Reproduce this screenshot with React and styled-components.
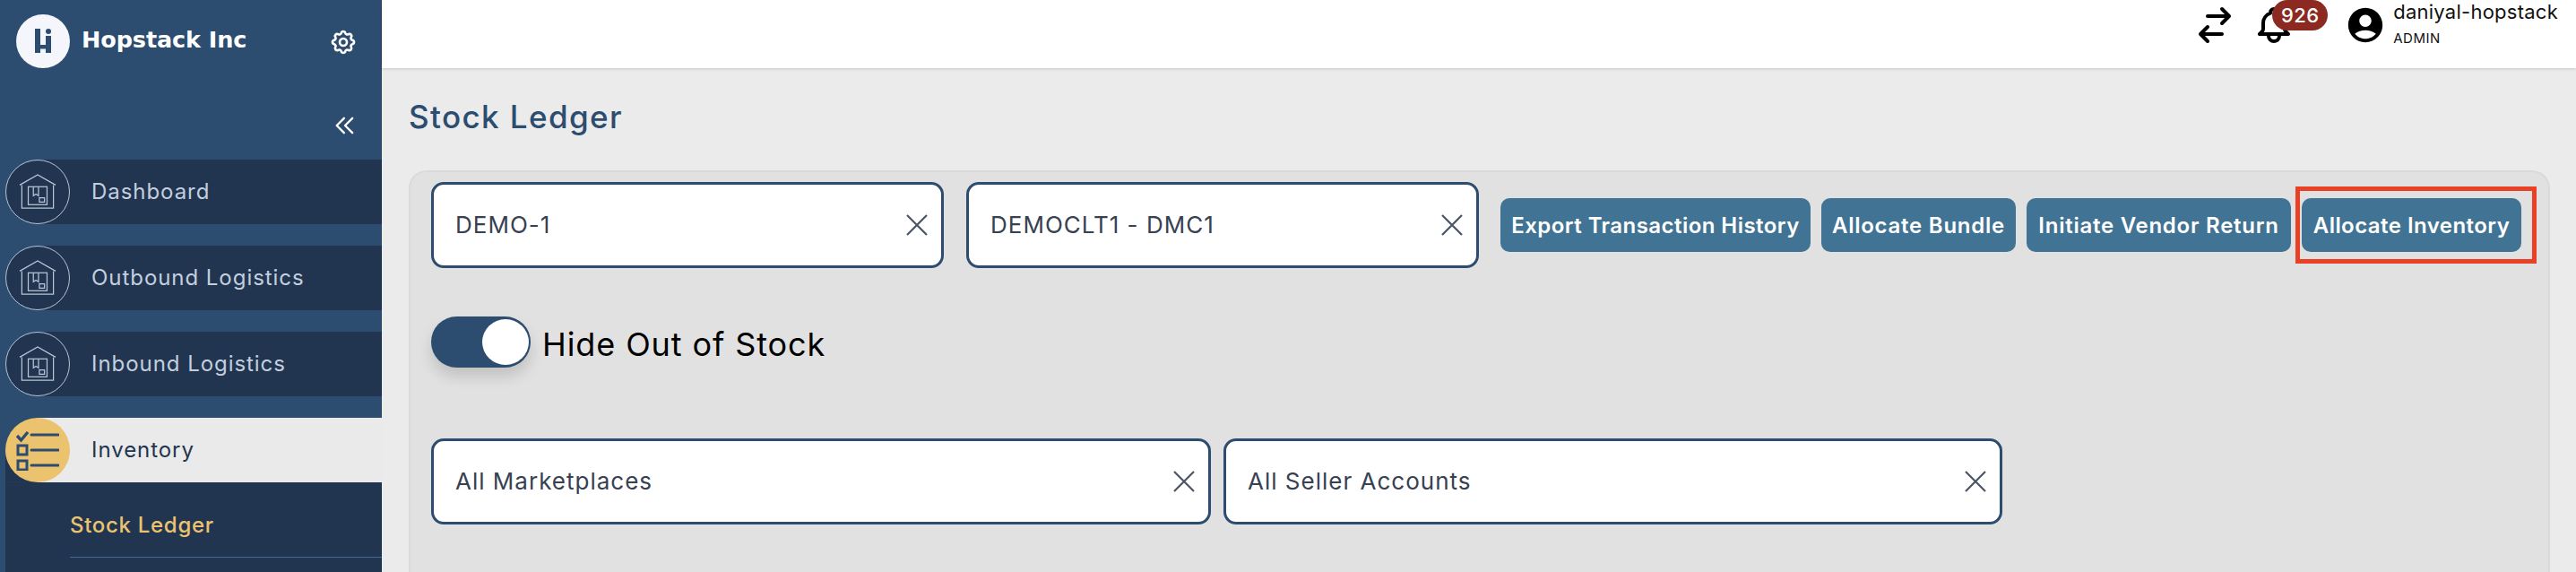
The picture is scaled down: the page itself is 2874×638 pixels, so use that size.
import React from "react";
import styled, { createGlobalStyle } from "styled-components";
import {
  HiOutlineCog,
  HiOutlineBell,
  HiOutlineSwitchHorizontal,
  HiOutlineChevronDoubleLeft,
} from "react-icons/hi";

const Global = createGlobalStyle`
  html, body { margin: 0; padding: 0; }
  body { font-family: Inter, "Liberation Sans", sans-serif; background: #ebebeb; overflow: hidden; }
  * { box-sizing: border-box; }
`;

const Shell = styled.div`
  display: flex;
  width: 2874px;
  height: 638px;
  overflow: hidden;
`;

const Sidebar = styled.aside`
  width: 426px;
  flex: none;
  background: #2c4c70;
  display: flex;
  flex-direction: column;
`;

const Brand = styled.div`
  height: 178px;
  padding: 16px 27px 0 18px;
  display: grid;
  grid-template-columns: 60px 1fr 30px;
  grid-template-rows: 60px 1fr;
  column-gap: 13px;
  align-items: center;
`;

const LogoDisc = styled.div`
  width: 60px;
  height: 60px;
  border-radius: 50%;
  background: #f4f6fb;
  display: flex;
  align-items: center;
  justify-content: center;
`;

const BrandName = styled.div`
  font-family: "DejaVu Sans", sans-serif;
  font-weight: 700;
  font-size: 25.5px;
  color: #fff;
  white-space: nowrap;
  margin-top: -4px;
  letter-spacing: -0.1px;
`;

const GearButton = styled.div`
  color: #fff;
  display: flex;
  font-size: 38px;
  margin: 2px 0 0 -2px;
`;

const Collapse = styled.div`
  grid-column: 3;
  grid-row: 2;
  color: #fff;
  font-size: 32px;
  display: flex;
  align-self: start;
  margin: 48px 0 0 2px;
`;

const Nav = styled.nav`
  display: flex;
  flex-direction: column;
  gap: 24px;
  padding-left: 6px;
`;

const NavRow = styled.div`
  height: 72px;
  display: flex;
  align-items: center;
  gap: 24px;
  background: ${(p) =>
    p.$active
      ? `linear-gradient(#eaeaea, #eaeaea) 36px 0 / 100% 100% no-repeat, linear-gradient(#223550, #223550) 0 100% / 36px 40% no-repeat`
      : `linear-gradient(#223550, #223550) 36px 0 / 100% 100% no-repeat`};
`;

const NavDisc = styled.div`
  width: 72px;
  height: 72px;
  border-radius: 50%;
  flex: none;
  display: flex;
  align-items: center;
  justify-content: center;
  background: ${(p) => (p.$active ? "#ebc36f" : "#223550")};
  border: ${(p) => (p.$active ? "none" : "1.2px solid #b9c5d4")};
`;

const NavLabel = styled.span`
  font-size: 24px;
  letter-spacing: 0.95px;
  white-space: nowrap;
  margin-top: -2px;
  color: ${(p) => (p.$active ? "#223550" : "#c3cfdf")};
`;

const SubMenu = styled.div`
  margin-top: -24px;
  background: #223550;
  height: 100px;
  padding: 0 0 0 72px;
`;

const SubItem = styled.div`
  height: 84px;
  display: flex;
  align-items: center;
  font-size: 24px;
  letter-spacing: 0.7px;
  font-weight: 500;
  color: #ebc36f;
  border-bottom: 1.5px solid #3a6e99;
  padding-top: 12px;
`;

const Main = styled.main`
  flex: 1;
  min-width: 0;
  display: flex;
  flex-direction: column;
`;

const Header = styled.header`
  height: 76px;
  flex: none;
  background: #fff;
  box-shadow: 0 1px 3px rgba(0, 0, 0, 0.16);
  display: flex;
  justify-content: flex-end;
  align-items: flex-start;
  padding-right: 20px;
  position: relative;
  z-index: 1;
`;

const HeaderIcon = styled.div`
  display: flex;
  font-size: 48px;
  color: #000;
  margin-top: 4px;
  margin-left: ${(p) => p.$ml || 0}px;
  position: relative;
`;

const Badge = styled.span`
  position: absolute;
  top: -4px;
  left: 22px;
  width: 62px;
  height: 34px;
  border-radius: 17px;
  background: #8c2a22;
  color: #fff;
  font-size: 22px;
  font-weight: 500;
  display: flex;
  align-items: center;
  justify-content: center;
  letter-spacing: 0.4px;
`;

const UserBlock = styled.div`
  display: flex;
  margin-left: 55px;
  gap: 8px;
`;

const UserGlyph = styled.svg`
  width: 46px;
  height: 46px;
  margin-top: 5px;
  flex: none;
`;

const UserText = styled.div`
  display: flex;
  flex-direction: column;
  color: #111;
`;

const UserName = styled.div`
  font-size: 22px;
  line-height: 26px;
  letter-spacing: 0.25px;
  white-space: nowrap;
`;

const UserRole = styled.div`
  font-size: 15px;
  line-height: 18px;
  margin-top: 8px;
  letter-spacing: 0.5px;
`;

const Content = styled.div`
  flex: 1;
  padding: 0 29px 0 30px;
  display: flex;
  flex-direction: column;
`;

const Title = styled.h1`
  margin: 0;
  height: 114px;
  padding-top: 32px;
  font-size: 35px;
  line-height: 44px;
  font-weight: 500;
  letter-spacing: 1.4px;
  color: #2c4c70;
`;

const Panel = styled.section`
  flex: 1;
  background: #e1e1e1;
  border: 2px solid #dadada;
  border-bottom: none;
  border-radius: 20px 20px 0 0;
  padding: 11px 0 0 23px;
`;

const TopRow = styled.div`
  display: flex;
  align-items: center;
`;

const Field = styled.div`
  width: ${(p) => p.$w}px;
  height: 96px;
  flex: none;
  margin-right: ${(p) => p.$mr || 0}px;
  background: #fff;
  border: 3px solid #2c4c70;
  border-radius: 14px;
  display: flex;
  align-items: center;
  justify-content: space-between;
  padding: 0 15px 0 24px;
`;

const FieldText = styled.span`
  font-size: 26px;
  letter-spacing: 1px;
  color: #374151;
  white-space: nowrap;
  margin-top: -2px;
`;

const ClearIcon = styled.svg`
  width: 24px;
  height: 24px;
  stroke: #4b5563;
  stroke-width: 2.2;
  fill: none;
  flex: none;
`;

const Actions = styled.div`
  display: flex;
  gap: 12px;
`;

const ActionSlot = styled.div`
  position: relative;
`;

const ActionButton = styled.button`
  height: 60px;
  width: ${(p) => p.$w}px;
  padding: 0;
  border: none;
  border-radius: 10px;
  background: #417394;
  color: #fff;
  font-family: inherit;
  font-size: 24px;
  font-weight: 600;
  letter-spacing: ${(p) => p.$ls}px;
  white-space: nowrap;
`;

const Highlight = styled.div`
  position: absolute;
  left: -7px;
  right: -17px;
  top: -13px;
  bottom: -13px;
  border: 5px solid #e94125;
  pointer-events: none;
`;

const ToggleRow = styled.div`
  display: flex;
  align-items: center;
  gap: 13px;
  margin-top: 54px;
`;

const Track = styled.div`
  width: 111px;
  height: 57px;
  border-radius: 29px;
  background: #2c4c70;
  display: flex;
  align-items: center;
  justify-content: flex-end;
  padding-right: 2px;
  box-shadow: 0 10px 16px rgba(0, 0, 0, 0.14);
`;

const Knob = styled.div`
  width: 52px;
  height: 51px;
  border-radius: 50%;
  background: #fff;
`;

const ToggleLabel = styled.span`
  font-size: 36px;
  letter-spacing: 0.9px;
  color: #000;
  white-space: nowrap;
  margin-top: 4px;
`;

const FilterRow = styled.div`
  display: flex;
  gap: 14px;
  margin-top: 79px;
`;

const Clear = () => (
  <ClearIcon viewBox="0 0 24 24">
    <path d="M1 1 L23 23 M23 1 L1 23" />
  </ClearIcon>
);

const LogoMark = () => (
  <svg width="18" height="28" viewBox="0 0 18 28">
    <rect x="0" y="0" width="6" height="27" fill="#2c4c70" />
    <rect x="0" y="18" width="18" height="4.5" fill="#2c4c70" />
    <rect x="12" y="8" width="6" height="19" fill="#2c4c70" />
    <circle cx="15" cy="3" r="3" fill="#2c4c70" />
  </svg>
);

const Warehouse = () => (
  <svg width="42" height="40" viewBox="0 0 44 42" fill="none" stroke="#b9c5d4" strokeWidth="1.3">
    <path d="M1 13 L22 1 L43 13" />
    <path d="M3.5 13 V40 H40.5 V13" />
    <rect x="11" y="15" width="22" height="21" />
    <path d="M17 15 V25.5 L20 23.5 L23 25.5 V15" />
    <path d="M24 28 H30 V33 H24 Z" />
  </svg>
);

const Checklist = () => (
  <svg width="48" height="46" viewBox="0 0 48 46" fill="none" stroke="#2c4c70">
    <path d="M1 7 L5.5 12 L13 3" strokeWidth="3.4" />
    <path d="M17 6 H47" strokeWidth="3" strokeLinecap="round" />
    <rect x="2" y="18" width="10" height="10" strokeWidth="3" />
    <path d="M17 23 H47" strokeWidth="3" strokeLinecap="round" />
    <rect x="2" y="35" width="10" height="10" strokeWidth="3" />
    <path d="M17 40 H47" strokeWidth="3" strokeLinecap="round" />
  </svg>
);

const navItems = [
  { label: "Dashboard" },
  { label: "Outbound Logistics" },
  { label: "Inbound Logistics" },
];

const actions = [
  { label: "Export Transaction History", w: 346, ls: 0.45 },
  { label: "Allocate Bundle", w: 217, ls: 0.75 },
  { label: "Initiate Vendor Return", w: 295, ls: 0.75 },
];

export default function App() {
  return (
    <Shell>
      <Global />
      <Sidebar>
        <Brand>
          <LogoDisc>
            <LogoMark />
          </LogoDisc>
          <BrandName>Hopstack Inc</BrandName>
          <GearButton>
            <HiOutlineCog />
          </GearButton>
          <Collapse>
            <HiOutlineChevronDoubleLeft />
          </Collapse>
        </Brand>
        <Nav>
          {navItems.map((n) => (
            <NavRow key={n.label}>
              <NavDisc>
                <Warehouse />
              </NavDisc>
              <NavLabel>{n.label}</NavLabel>
            </NavRow>
          ))}
          <NavRow $active>
            <NavDisc $active>
              <Checklist />
            </NavDisc>
            <NavLabel $active>Inventory</NavLabel>
          </NavRow>
          <SubMenu>
            <SubItem>Stock Ledger</SubItem>
          </SubMenu>
        </Nav>
      </Sidebar>
      <Main>
        <Header>
          <HeaderIcon>
            <HiOutlineSwitchHorizontal />
          </HeaderIcon>
          <HeaderIcon $ml={18}>
            <HiOutlineBell />
            <Badge>926</Badge>
          </HeaderIcon>
          <UserBlock>
            <UserGlyph viewBox="0 0 24 24" fill="#000">
              <path d="M12 2C6.48 2 2 6.48 2 12s4.48 10 10 10 10-4.48 10-10S17.52 2 12 2zm0 4c1.93 0 3.5 1.57 3.5 3.5S13.93 13 12 13s-3.5-1.57-3.5-3.5S10.07 6 12 6zm0 14c-2.03 0-4.43-.82-6.14-2.88C7.55 15.8 9.68 15 12 15s4.45.8 6.14 2.12C16.43 19.18 14.03 20 12 20z" />
            </UserGlyph>
            <UserText>
              <UserName>daniyal-hopstack</UserName>
              <UserRole>ADMIN</UserRole>
            </UserText>
          </UserBlock>
        </Header>
        <Content>
          <Title>Stock Ledger</Title>
          <Panel>
            <TopRow>
              <Field $w={572} $mr={25}>
                <FieldText>DEMO-1</FieldText>
                <Clear />
              </Field>
              <Field $w={572} $mr={24}>
                <FieldText>DEMOCLT1 - DMC1</FieldText>
                <Clear />
              </Field>
              <Actions>
                {actions.map((a) => (
                  <ActionButton key={a.label} $w={a.w} $ls={a.ls}>
                    {a.label}
                  </ActionButton>
                ))}
                <ActionSlot>
                  <ActionButton $w={245} $ls={0.45}>
                    Allocate Inventory
                  </ActionButton>
                  <Highlight />
                </ActionSlot>
              </Actions>
            </TopRow>
            <ToggleRow>
              <Track>
                <Knob />
              </Track>
              <ToggleLabel>Hide Out of Stock</ToggleLabel>
            </ToggleRow>
            <FilterRow>
              <Field $w={870}>
                <FieldText>All Marketplaces</FieldText>
                <Clear />
              </Field>
              <Field $w={869}>
                <FieldText>All Seller Accounts</FieldText>
                <Clear />
              </Field>
            </FilterRow>
          </Panel>
        </Content>
      </Main>
    </Shell>
  );
}
